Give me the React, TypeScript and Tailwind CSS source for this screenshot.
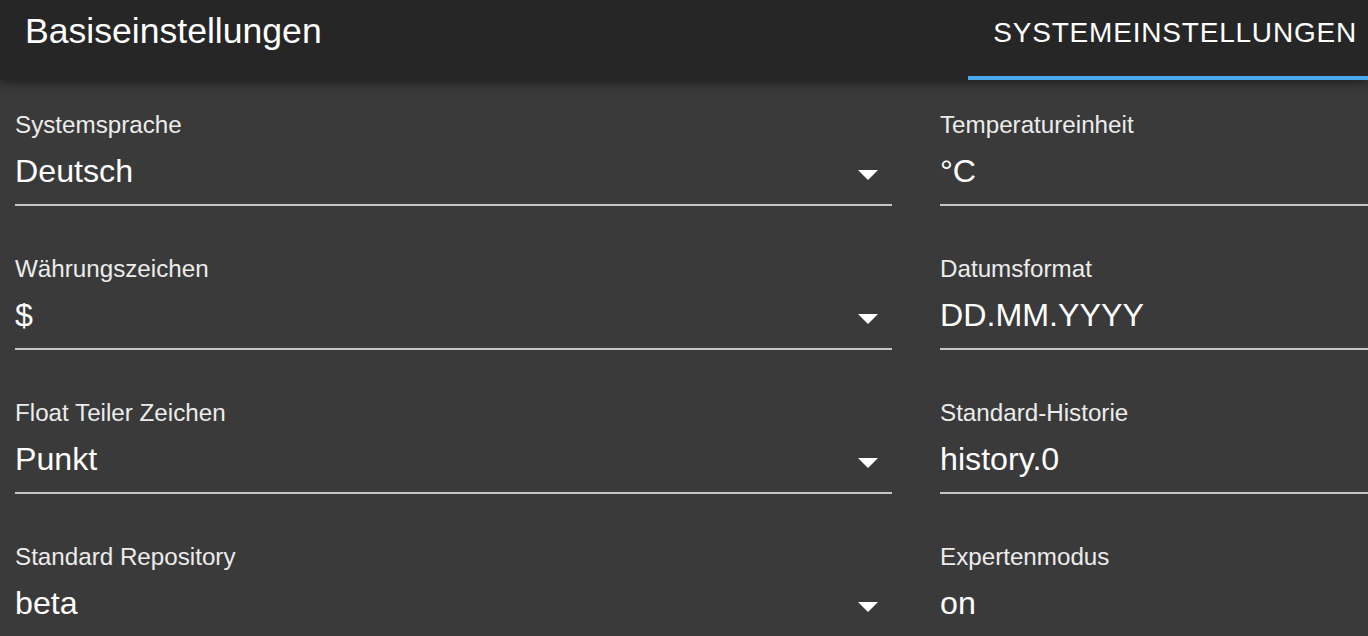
import React from "react";

interface Field {
    label: string;
    value: string;
}

const leftFields: Field[] = [
    { label: "Systemsprache", value: "Deutsch" },
    { label: "Währungszeichen", value: "$" },
    { label: "Float Teiler Zeichen", value: "Punkt" },
    { label: "Standard Repository", value: "beta" },
];

const rightFields: Field[] = [
    { label: "Temperatureinheit", value: "°C" },
    { label: "Datumsformat", value: "DD.MM.YYYY" },
    { label: "Standard-Historie", value: "history.0" },
    { label: "Expertenmodus", value: "on" },
];

function ArrowDropDown() {
    return (
        <svg viewBox="0 0 24 24" width="48" height="48" className="absolute right-0 top-[-5px] fill-white">
            <path d="M7 10l5 5 5-5z" />
        </svg>
    );
}

function SelectField({ field }: { field: Field }) {
    return (
        <div className="mb-[51px]">
            <div className="text-[24.2px] leading-[24px] text-[#ececec]">{field.label}</div>
            <div className="relative mt-[18px]">
                <div className="text-[32.2px] leading-[32px] text-white">{field.value}</div>
                <ArrowDropDown />
            </div>
            <div className="mt-[17px] h-[2px] bg-[#c6c6c6]" />
        </div>
    );
}

export default function App() {
    return (
        <div className="min-h-screen w-full overflow-hidden bg-[#3a3a3a] font-['Liberation_Sans',Arial,sans-serif]">
            <header className="relative z-10 h-[80px] bg-[#262626] shadow-[0_3px_10px_rgba(0,0,0,0.45)]">
                <div className="flex h-full w-[1382px] items-start justify-between">
                    <h1 className="pl-[25px] pt-[14px] text-[35.6px] leading-[35px] font-normal text-white">Basiseinstellungen</h1>
                    <div className="relative h-full px-[25px] pt-[19px]">
                        <span className="text-[28px] leading-[28px] tracking-[0.8px] text-white">SYSTEMEINSTELLUNGEN</span>
                        <div className="absolute bottom-0 left-0 right-0 h-[4px] bg-[#4aa9ef]" />
                    </div>
                </div>
            </header>

            <main className="pt-[33px] pl-[15px]">
                <div className="grid w-[1802px] grid-cols-[877px_877px] gap-x-[48px]">
                    <div>
                        {leftFields.map((f) => (
                            <SelectField key={f.label} field={f} />
                        ))}
                    </div>
                    <div>
                        {rightFields.map((f) => (
                            <SelectField key={f.label} field={f} />
                        ))}
                    </div>
                </div>
            </main>
        </div>
    );
}
